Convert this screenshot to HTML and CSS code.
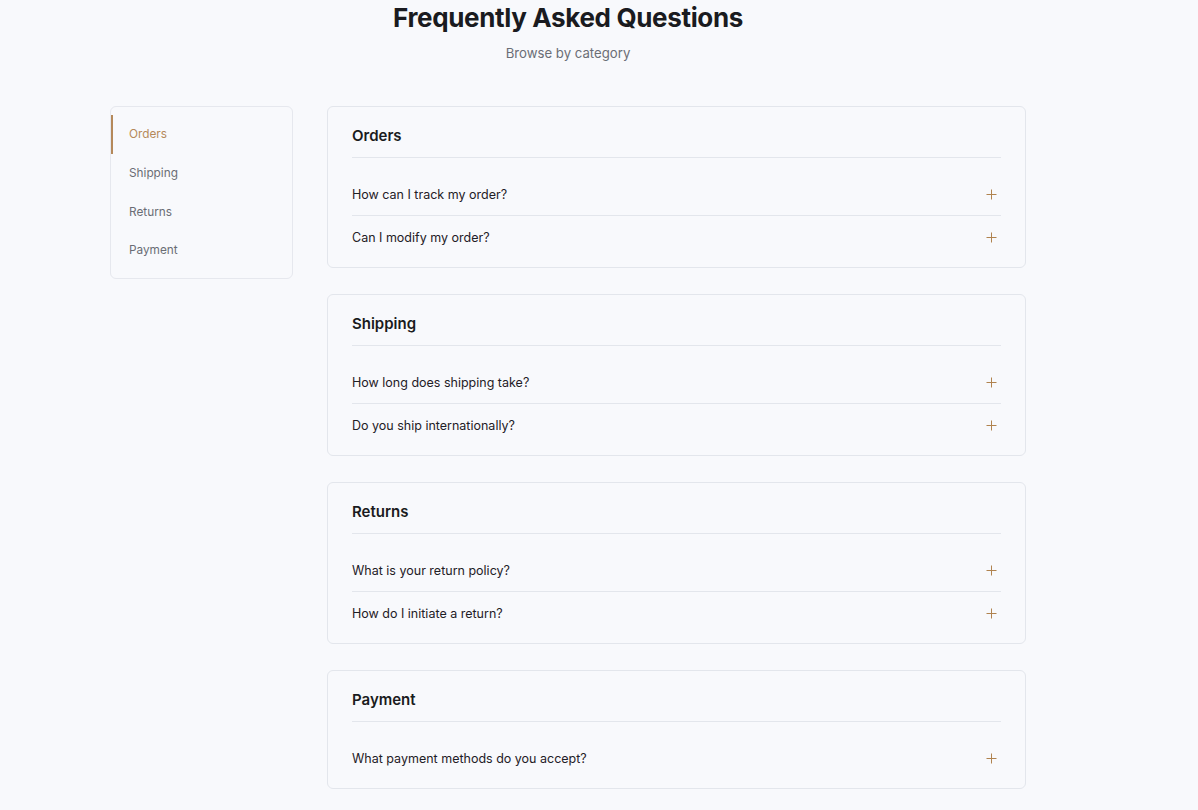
FILE: index.html
```html
<!DOCTYPE html>
<html lang="en">
<head>
<meta charset="utf-8">
<title>FAQ</title>
<link rel="stylesheet" href="styles.css">
</head>
<body>
<div class="page">
  <header class="head">
    <h1 class="title">Frequently Asked Questions</h1>
    <p class="subtitle">Browse by category</p>
  </header>
  <div class="layout">
    <nav class="side">
      <a class="side-item active">Orders</a>
      <a class="side-item">Shipping</a>
      <a class="side-item">Returns</a>
      <a class="side-item">Payment</a>
    </nav>
    <main class="main">
      <section class="card">
        <h2 class="card-title">Orders</h2>
        <ul class="qs">
          <li class="q"><span>How can I track my order?</span><svg class="plus" viewBox="0 0 11 11"><path d="M5.5 0.5v10M0.5 5.5h10"/></svg></li>
          <li class="q"><span>Can I modify my order?</span><svg class="plus" viewBox="0 0 11 11"><path d="M5.5 0.5v10M0.5 5.5h10"/></svg></li>
        </ul>
      </section>
      <section class="card">
        <h2 class="card-title">Shipping</h2>
        <ul class="qs">
          <li class="q"><span>How long does shipping take?</span><svg class="plus" viewBox="0 0 11 11"><path d="M5.5 0.5v10M0.5 5.5h10"/></svg></li>
          <li class="q"><span>Do you ship internationally?</span><svg class="plus" viewBox="0 0 11 11"><path d="M5.5 0.5v10M0.5 5.5h10"/></svg></li>
        </ul>
      </section>
      <section class="card">
        <h2 class="card-title">Returns</h2>
        <ul class="qs">
          <li class="q"><span>What is your return policy?</span><svg class="plus" viewBox="0 0 11 11"><path d="M5.5 0.5v10M0.5 5.5h10"/></svg></li>
          <li class="q"><span>How do I initiate a return?</span><svg class="plus" viewBox="0 0 11 11"><path d="M5.5 0.5v10M0.5 5.5h10"/></svg></li>
        </ul>
      </section>
      <section class="card">
        <h2 class="card-title">Payment</h2>
        <ul class="qs">
          <li class="q"><span>What payment methods do you accept?</span><svg class="plus" viewBox="0 0 11 11"><path d="M5.5 0.5v10M0.5 5.5h10"/></svg></li>
        </ul>
      </section>
    </main>
  </div>
</div>
</body>
</html>
```
FILE: styles.css
```css
* { box-sizing: border-box; }
html, body { margin: 0; padding: 0; }
body {
  background: #f8f9fc;
  font-family: Inter, "Noto Sans", "Liberation Sans", sans-serif;
  color: #1c1d22;
}
.page {
  width: 916px;
  margin-left: 110px;
  padding-top: 2px;
}
.head { text-align: center; }
.title {
  margin: 0;
  font-size: 26px;
  line-height: 32px;
  font-weight: 700;
  letter-spacing: -0.35px;
  color: #1a1b20;
}
.subtitle {
  margin: 9px 0 0;
  font-size: 13.2px;
  line-height: 20px;
  color: #6b6e76;
}
.layout {
  display: flex;
  align-items: flex-start;
  gap: 34px;
  margin-top: 43px;
}
.side {
  width: 183px;
  flex: none;
  display: flex;
  flex-direction: column;
  padding: 8px 0;
  border: 1px solid #e6e8ee;
  border-radius: 6px;
  background: #f8f9fc;
}
.side-item {
  display: block;
  padding: 11px 16px;
  border-left: 2px solid transparent;
  font-size: 11.8px;
  line-height: 16.8px;
  color: #6a6d75;
}
.side-item.active {
  color: #b5895a;
  border-left-color: #b5895a;
}
.main {
  flex: 1;
  display: flex;
  flex-direction: column;
  gap: 26px;
}
.card {
  border: 1px solid #e3e6ec;
  border-radius: 6px;
  background: #f8f9fc;
  padding: 18px 24px 8px;
}
.card-title {
  margin: 0;
  padding-bottom: 10px;
  border-bottom: 1px solid #e3e6ec;
  font-size: 15px;
  line-height: 22px;
  font-weight: 600;
  color: #1a1b20;
}
.qs {
  list-style: none;
  margin: 15px 0 0;
  padding: 0;
}
.q {
  display: flex;
  align-items: center;
  justify-content: space-between;
  height: 43px;
  border-bottom: 1px solid #e3e6ec;
  font-size: 12.5px;
  color: #1f2026;
}
.q:last-child { border-bottom: none; }
.plus {
  width: 11px;
  height: 11px;
  margin-right: 4px;
  stroke: #b0834f;
  stroke-width: 1;
  fill: none;
}
```
